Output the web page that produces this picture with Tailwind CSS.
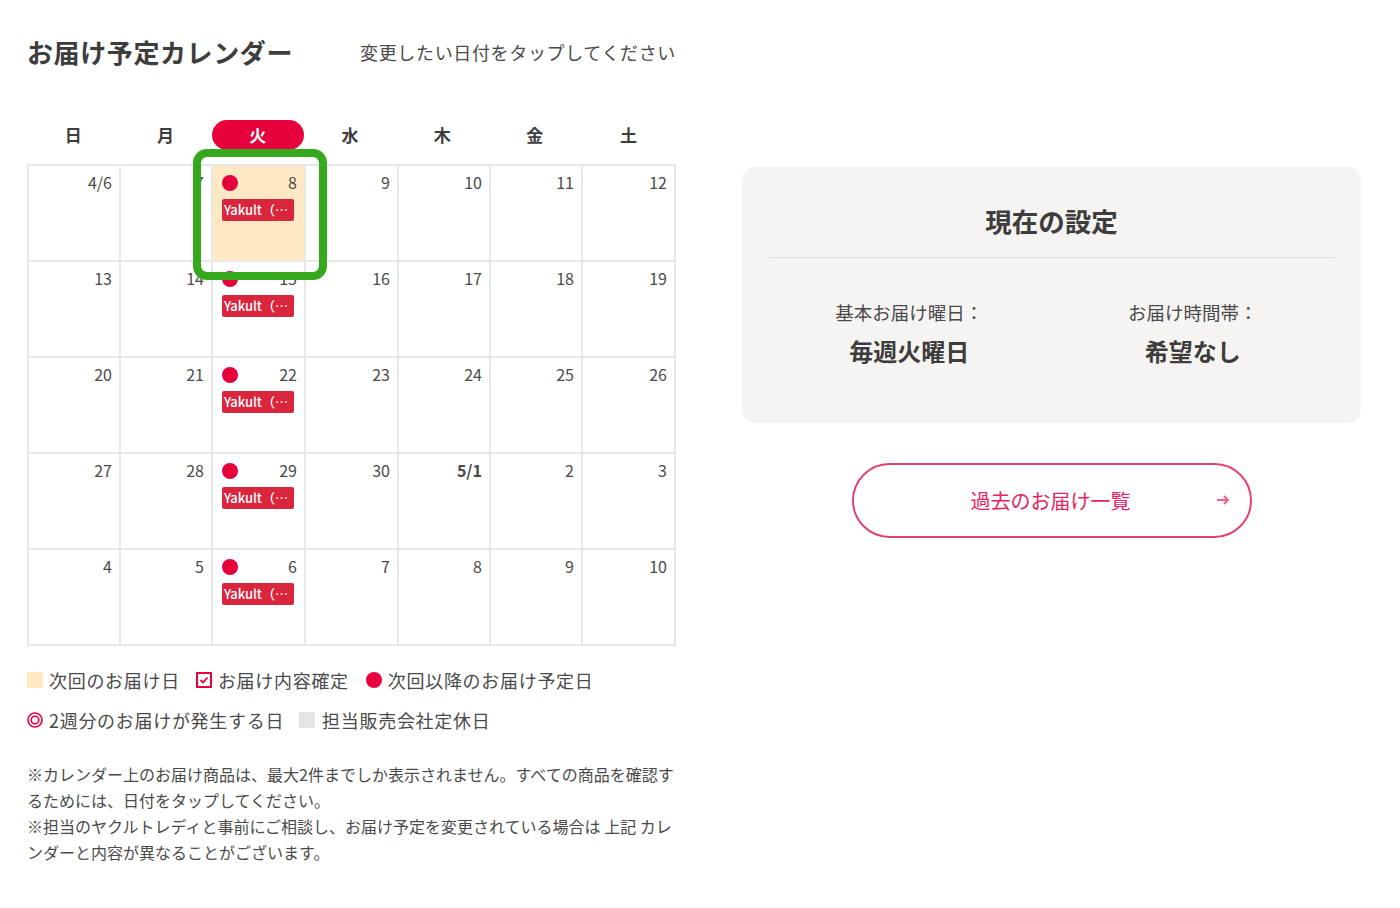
<!DOCTYPE html>
<html lang="ja">
<head>
    <meta charset="UTF-8">
    <title>お届け予定カレンダー</title>
    <script src="https://cdn.jsdelivr.net/npm/@tailwindcss/browser@4"></script>
</head>
<body class="bg-white text-[#4a4a4a] font-['Noto_Sans_CJK_JP','Noto_Sans',sans-serif]">
<div class="relative flex w-[1400px] h-[908px] overflow-hidden pl-[27px]">
    <!-- left column -->
    <div class="w-[649px] shrink-0">
        <div class="flex items-center justify-between h-[40px] mt-[32px]">
            <h2 class="text-[26px] font-bold text-[#3d3d3d] tracking-[0.6px] -mt-[1px]">お届け予定カレンダー</h2>
            <p class="text-[18px] tracking-[0.65px] whitespace-nowrap">変更したい日付をタップしてください</p>
        </div>
        <!-- weekdays -->
        <div class="grid grid-cols-[repeat(6,92.3px)_1fr] mt-[48px] h-[30px] text-[17px] font-bold text-[#3d3d3d] text-center leading-[29px]">
            <div>日</div><div>月</div>
            <div class="bg-[#e6003c] text-white rounded-full">火</div>
            <div>水</div><div>木</div><div>金</div><div>土</div>
        </div>
        <!-- calendar -->
        <div class="grid grid-cols-[92px_92px_93px_93px_92px_92px_1fr] auto-rows-[96px] mt-[14px] border-r-2 border-b-2 border-[#e8e8e8] text-[16px] text-right">
            <div class="border-l-2 border-t-2 border-[#e8e8e8] pr-[7px] pt-[5px] leading-[23px]">4/6</div>
            <div class="border-l-2 border-t-2 border-[#e8e8e8] pr-[7px] pt-[5px] leading-[23px]">7</div>
            <div class="border-l-2 border-t-2 border-[#e8e8e8] bg-[#ffe9c4] pl-[9px] pr-[7px] pt-[5px] leading-[23px]">
                <div class="flex items-center justify-between"><span class="w-4 h-4 rounded-full bg-[#e6003c]"></span><span>8</span></div>
                <div class="mt-[5px] w-[72px] h-[22px] rounded-[2px] bg-[#d9263d] text-white text-[13px] font-medium leading-[21px] text-left pl-[2px] whitespace-nowrap">Yakult（…</div>
            </div>
            <div class="border-l-2 border-t-2 border-[#e8e8e8] pr-[7px] pt-[5px] leading-[23px]">9</div>
            <div class="border-l-2 border-t-2 border-[#e8e8e8] pr-[7px] pt-[5px] leading-[23px]">10</div>
            <div class="border-l-2 border-t-2 border-[#e8e8e8] pr-[7px] pt-[5px] leading-[23px]">11</div>
            <div class="border-l-2 border-t-2 border-[#e8e8e8] pr-[7px] pt-[5px] leading-[23px]">12</div>

            <div class="border-l-2 border-t-2 border-[#e8e8e8] pr-[7px] pt-[5px] leading-[23px]">13</div>
            <div class="border-l-2 border-t-2 border-[#e8e8e8] pr-[7px] pt-[5px] leading-[23px]">14</div>
            <div class="border-l-2 border-t-2 border-[#e8e8e8] pl-[9px] pr-[7px] pt-[5px] leading-[23px]">
                <div class="flex items-center justify-between"><span class="w-4 h-4 rounded-full bg-[#e6003c]"></span><span>15</span></div>
                <div class="mt-[5px] w-[72px] h-[22px] rounded-[2px] bg-[#d9263d] text-white text-[13px] font-medium leading-[21px] text-left pl-[2px] whitespace-nowrap">Yakult（…</div>
            </div>
            <div class="border-l-2 border-t-2 border-[#e8e8e8] pr-[7px] pt-[5px] leading-[23px]">16</div>
            <div class="border-l-2 border-t-2 border-[#e8e8e8] pr-[7px] pt-[5px] leading-[23px]">17</div>
            <div class="border-l-2 border-t-2 border-[#e8e8e8] pr-[7px] pt-[5px] leading-[23px]">18</div>
            <div class="border-l-2 border-t-2 border-[#e8e8e8] pr-[7px] pt-[5px] leading-[23px]">19</div>

            <div class="border-l-2 border-t-2 border-[#e8e8e8] pr-[7px] pt-[5px] leading-[23px]">20</div>
            <div class="border-l-2 border-t-2 border-[#e8e8e8] pr-[7px] pt-[5px] leading-[23px]">21</div>
            <div class="border-l-2 border-t-2 border-[#e8e8e8] pl-[9px] pr-[7px] pt-[5px] leading-[23px]">
                <div class="flex items-center justify-between"><span class="w-4 h-4 rounded-full bg-[#e6003c]"></span><span>22</span></div>
                <div class="mt-[5px] w-[72px] h-[22px] rounded-[2px] bg-[#d9263d] text-white text-[13px] font-medium leading-[21px] text-left pl-[2px] whitespace-nowrap">Yakult（…</div>
            </div>
            <div class="border-l-2 border-t-2 border-[#e8e8e8] pr-[7px] pt-[5px] leading-[23px]">23</div>
            <div class="border-l-2 border-t-2 border-[#e8e8e8] pr-[7px] pt-[5px] leading-[23px]">24</div>
            <div class="border-l-2 border-t-2 border-[#e8e8e8] pr-[7px] pt-[5px] leading-[23px]">25</div>
            <div class="border-l-2 border-t-2 border-[#e8e8e8] pr-[7px] pt-[5px] leading-[23px]">26</div>

            <div class="border-l-2 border-t-2 border-[#e8e8e8] pr-[7px] pt-[5px] leading-[23px]">27</div>
            <div class="border-l-2 border-t-2 border-[#e8e8e8] pr-[7px] pt-[5px] leading-[23px]">28</div>
            <div class="border-l-2 border-t-2 border-[#e8e8e8] pl-[9px] pr-[7px] pt-[5px] leading-[23px]">
                <div class="flex items-center justify-between"><span class="w-4 h-4 rounded-full bg-[#e6003c]"></span><span>29</span></div>
                <div class="mt-[5px] w-[72px] h-[22px] rounded-[2px] bg-[#d9263d] text-white text-[13px] font-medium leading-[21px] text-left pl-[2px] whitespace-nowrap">Yakult（…</div>
            </div>
            <div class="border-l-2 border-t-2 border-[#e8e8e8] pr-[7px] pt-[5px] leading-[23px]">30</div>
            <div class="border-l-2 border-t-2 border-[#e8e8e8] pr-[7px] pt-[5px] leading-[23px] font-bold">5/1</div>
            <div class="border-l-2 border-t-2 border-[#e8e8e8] pr-[7px] pt-[5px] leading-[23px]">2</div>
            <div class="border-l-2 border-t-2 border-[#e8e8e8] pr-[7px] pt-[5px] leading-[23px]">3</div>

            <div class="border-l-2 border-t-2 border-[#e8e8e8] pr-[7px] pt-[5px] leading-[23px]">4</div>
            <div class="border-l-2 border-t-2 border-[#e8e8e8] pr-[7px] pt-[5px] leading-[23px]">5</div>
            <div class="border-l-2 border-t-2 border-[#e8e8e8] pl-[9px] pr-[7px] pt-[5px] leading-[23px]">
                <div class="flex items-center justify-between"><span class="w-4 h-4 rounded-full bg-[#e6003c]"></span><span>6</span></div>
                <div class="mt-[5px] w-[72px] h-[22px] rounded-[2px] bg-[#d9263d] text-white text-[13px] font-medium leading-[21px] text-left pl-[2px] whitespace-nowrap">Yakult（…</div>
            </div>
            <div class="border-l-2 border-t-2 border-[#e8e8e8] pr-[7px] pt-[5px] leading-[23px]">7</div>
            <div class="border-l-2 border-t-2 border-[#e8e8e8] pr-[7px] pt-[5px] leading-[23px]">8</div>
            <div class="border-l-2 border-t-2 border-[#e8e8e8] pr-[7px] pt-[5px] leading-[23px]">9</div>
            <div class="border-l-2 border-t-2 border-[#e8e8e8] pr-[7px] pt-[5px] leading-[23px]">10</div>
        </div>
        <!-- legend -->
        <div class="flex items-center mt-[19px] h-[30px] text-[18px] tracking-[0.7px] whitespace-nowrap">
            <span class="w-4 h-4 bg-[#ffe9c4] mr-[6px]"></span>次回のお届け日
            <svg class="ml-[16px] mr-[6px]" width="16" height="16" viewBox="0 0 16 16" fill="none"><rect x="1" y="1" width="14" height="14" stroke="#e6003c" stroke-width="2"/><path d="M4.5 8l2.5 2.5 4.5-5" stroke="#e6003c" stroke-width="1.8"/></svg>お届け内容確定
            <span class="ml-[17px] mr-[6px] w-4 h-4 rounded-full bg-[#e6003c]"></span>次回以降のお届け予定日
        </div>
        <div class="flex items-center mt-[10px] h-[30px] text-[18px] tracking-[0.7px] whitespace-nowrap">
            <svg class="mr-[6px]" width="16" height="16" viewBox="0 0 16 16" fill="none"><circle cx="8" cy="8" r="7" stroke="#e6003c" stroke-width="1.6"/><circle cx="8" cy="8" r="3.8" stroke="#e6003c" stroke-width="1.6"/></svg>2週分のお届けが発生する日
            <span class="ml-[15px] mr-[7px] w-4 h-4 bg-[#e5e5e5]"></span>担当販売会社定休日
        </div>
        <!-- notes -->
        <p class="mt-[26px] text-[16px] leading-[26px]">※カレンダー上のお届け商品は、最大2件までしか表示されません。すべての商品を確認するためには、日付をタップしてください。<br>※担当のヤクルトレディと事前にご相談し、お届け予定を変更されている場合は 上記 カレンダーと内容が異なることがございます。</p>
    </div>
    <!-- right column -->
    <div class="ml-[66px] w-[619px] pt-[167px]">
        <div class="h-[256px] rounded-[14px] bg-[#f6f4f2] px-[27px]">
            <h3 class="h-[91px] border-b border-[#dddddd] text-center text-[26.5px] font-bold text-[#3d3d3d] leading-[108px]">現在の設定</h3>
            <div class="flex mt-[39px] text-center">
                <div class="w-[281px]">
                    <p class="text-[18.5px] leading-[30px]">基本お届け曜日：</p>
                    <p class="mt-[9px] text-[24px] font-bold text-[#3d3d3d] leading-[29px]">毎週火曜日</p>
                </div>
                <div class="w-[283px] ml-[2px]">
                    <p class="text-[18.5px] leading-[30px]">お届け時間帯：</p>
                    <p class="mt-[9px] text-[24px] font-bold text-[#3d3d3d] leading-[29px]">希望なし</p>
                </div>
            </div>
        </div>
        <a class="relative mx-auto mt-[40px] flex items-center justify-center w-[400px] h-[75px] rounded-full border-2 border-[#e0426f] text-[#e6245f] text-[20px]">
            <span class="mr-[2px]">過去のお届け一覧</span>
            <svg class="absolute right-[20px] top-[28px]" width="14" height="14" viewBox="0 0 14 14" fill="none"><path d="M1 7h11M8 3l4 4-4 4" stroke="#ec5f88" stroke-width="1.8"/></svg>
        </a>
    </div>
    <!-- annotation highlight -->
    <div class="absolute left-[193px] top-[149px] w-[134px] h-[131px] rounded-[14px] border-[8px] border-[#36a81e]"></div>
</div>
</body>
</html>
